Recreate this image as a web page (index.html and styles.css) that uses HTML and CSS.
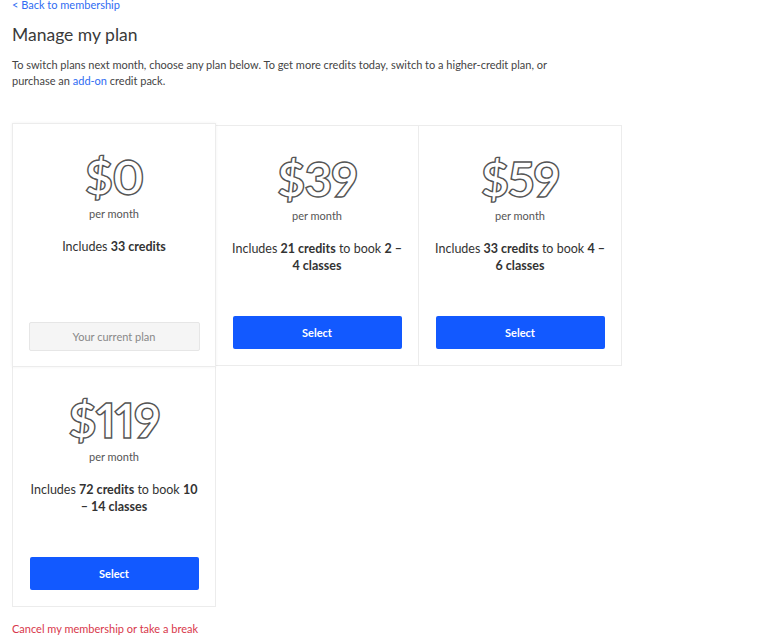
FILE: index.html
```html
<!DOCTYPE html>
<html lang="en">
<head>
	<meta charset="UTF-8">
	<title>Manage my plan</title>
	<link rel="stylesheet" href="styles.css">
</head>
<body>
	<div class="page">
		<a class="back" href="#">&lt; Back to membership</a>
		<h1 class="title">Manage my plan</h1>
		<p class="intro">To switch plans next month, choose any plan below. To get more credits today, switch to a higher-credit plan, or purchase an <a href="#">add-on</a> credit pack.</p>

		<div class="plans">
			<div class="plan current">
				<div class="price">$0</div>
				<div class="per">per month</div>
				<p class="desc">Includes <b>33 credits</b></p>
				<button class="btn btn-current">Your current plan</button>
			</div>
			<div class="plan">
				<div class="price">$39</div>
				<div class="per">per month</div>
				<p class="desc">Includes <b>21 credits</b> to book <b>2 – 4 classes</b></p>
				<button class="btn">Select</button>
			</div>
			<div class="plan">
				<div class="price">$59</div>
				<div class="per">per month</div>
				<p class="desc">Includes <b>33 credits</b> to book <b>4 – 6 classes</b></p>
				<button class="btn">Select</button>
			</div>
			<div class="plan">
				<div class="price">$119</div>
				<div class="per">per month</div>
				<p class="desc">Includes <b>72 credits</b> to book <b>10 – 14 classes</b></p>
				<button class="btn">Select</button>
			</div>
		</div>

		<a class="cancel" href="#">Cancel my membership or take a break</a>
	</div>
</body>
</html>
```

FILE: styles.css
```css
*{
	margin:0;
	padding:0;
	box-sizing: border-box;
}
body{
	font-family: Lato, "Noto Sans", sans-serif;
	color: #333;
	background: #fff;
}
a{
	color: #2f6cf2;
	text-decoration: none;
}
.page{
	padding: 0 12px;
	margin-top: -3px;
}
.back{
	display: block;
	font-size: 11px;
	line-height: 16px;
}
.title{
	font-size: 17.5px;
	font-weight: 400;
	color: #3a3a3a;
	margin-top: 10px;
	line-height: 24px;
}
.intro{
	font-size: 11px;
	line-height: 16px;
	color: #444;
	width: 545px;
	margin-top: 10px;
}
.plans{
	display: grid;
	grid-template-columns: repeat(3, 203px);
	margin-top: 36px;
}
.plan{
	border: 1px solid #ececec;
	margin: 0 -1px -1px 0;
	height: 241px;
	padding: 23px 16px 0;
	display: flex;
	flex-direction: column;
	align-items: center;
	text-align: center;
	background: #fff;
}
.plan.current{
	position: relative;
	z-index: 1;
	margin-top: -2px;
	height: 244px;
	box-shadow: 0 0 3px rgba(0,0,0,0.06);
}
.price{
	font-size: 48px;
	font-weight: 900;
	line-height: 60px;
	color: #fff;
	-webkit-text-stroke: 1.4px #555;
	letter-spacing: -1px;
	font-variant-numeric: proportional-nums;
}
.per{
	font-size: 11px;
	color: #555;
	line-height: 14px;
}
.desc{
	font-size: 12.5px;
	line-height: 17px;
	color: #333;
	margin-top: 17px;
	min-height: 51px;
}
.desc b{
	font-weight: 700;
}
.btn{
	margin-top: auto;
	margin-bottom: 16px;
	width: 169px;
	height: 33px;
	border: none;
	border-radius: 2px;
	background: #1259ff;
	color: #fff;
	font-family: Lato, "Noto Sans", sans-serif;
	font-size: 11px;
	font-weight: 700;
}
.btn-current{
	width: 171px;
	height: 29px;
	background: #f5f5f5;
	border: 1px solid #e6e6e6;
	color: #888;
	font-weight: 400;
	margin-bottom: 15px;
}
.cancel{
	display: block;
	margin-top: 16px;
	font-size: 11px;
	color: #d8374b;
}
```
